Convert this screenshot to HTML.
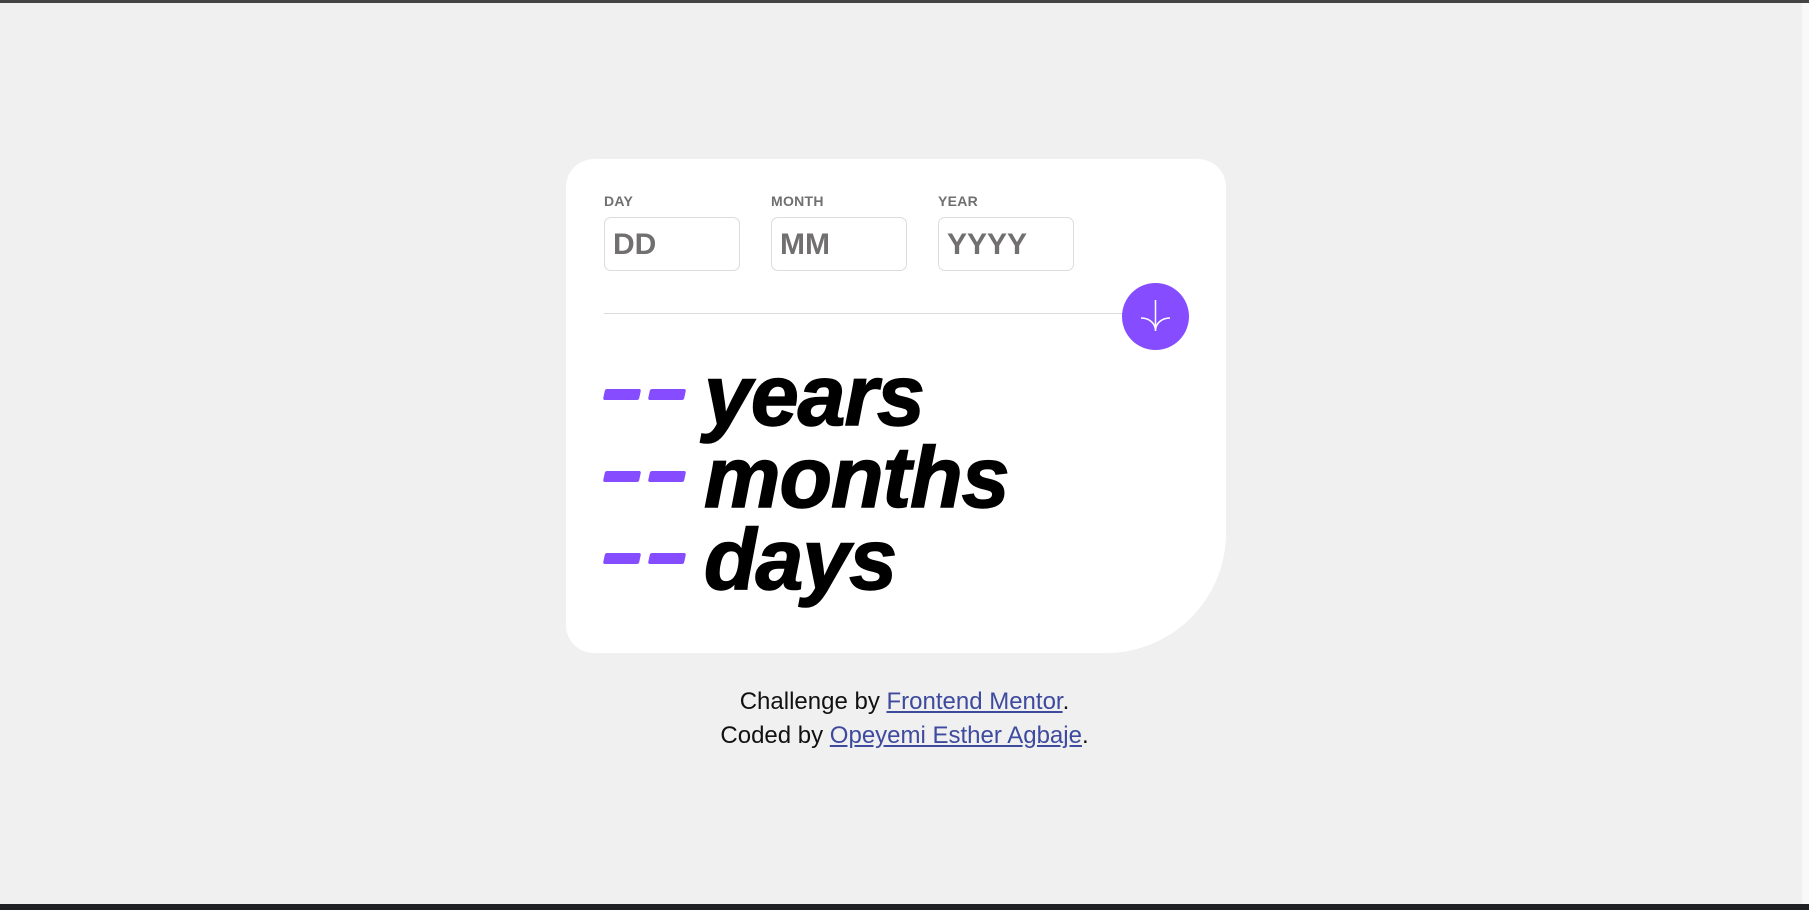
<!DOCTYPE html>
<html><head><style>
*{margin:0;padding:0;box-sizing:border-box}
body{width:1809px;height:910px;background:#f0f0f0;position:relative;overflow:hidden;font-family:"Liberation Sans",sans-serif}
.top{position:absolute;left:0;top:0;width:1809px;height:3px;background:#444}
.bot{position:absolute;left:0;top:904px;width:1809px;height:6px;background:#202124}
.sb{position:absolute;left:1802px;top:3px;width:7px;height:901px;background:#f9f9f9}
.card{position:absolute;left:566px;top:159px;width:660px;height:494px;background:#fff;border-radius:28px 28px 120px 28px}
.lab{position:absolute;top:34px;font-size:14px;font-weight:bold;color:#716f6f;letter-spacing:0.3px}
.inp{position:absolute;top:58px;width:136px;height:54px;border:1px solid #dcdcdc;border-radius:7px;font-size:30px;font-weight:bold;color:#716f6f;padding:10px 0 0 8px}
.line{position:absolute;left:38px;top:154px;width:520px;height:1px;background:#dcdcdc}
.btn{position:absolute;left:556px;top:124px;width:67px;height:67px;border-radius:50%;background:#854dff}
.row{position:absolute;left:38px;height:82px;font-size:86px;font-weight:bold;font-style:italic;line-height:82px;color:#000}
.d{position:absolute;top:34px;width:36px;height:11px;border-radius:2px;background:#854dff;transform:skewX(-12deg)}
.row span.t{position:absolute;left:100px;top:0px;letter-spacing:-1px;-webkit-text-stroke:1.5px #000}
.foot{position:absolute;left:0;width:1809px;text-align:center;font-size:24px;color:#111}
.foot a{color:#3e4a9e;text-decoration:underline}
</style></head><body>
<div class="top"></div><div class="sb"></div><div class="bot"></div>
<div class="card">
<div class="lab" style="left:38px">DAY</div>
<div class="lab" style="left:205px">MONTH</div>
<div class="lab" style="left:372px">YEAR</div>
<div class="inp" style="left:38px">DD</div>
<div class="inp" style="left:205px">MM</div>
<div class="inp" style="left:372px">YYYY</div>
<div class="line"></div>
<div class="btn"><svg width="67" height="67" viewBox="0 0 67 67"><path d="M33.5 17V48M19 35C27 35 33.5 40 33.5 48M48 35C40 35 33.5 40 33.5 48" stroke="#fff" stroke-width="1.5" fill="none"/></svg></div>
<div class="row" style="top:196px"><i class="d" style="left:0"></i><i class="d" style="left:45px"></i><span class="t">years</span></div>
<div class="row" style="top:278px"><i class="d" style="left:0"></i><i class="d" style="left:45px"></i><span class="t">months</span></div>
<div class="row" style="top:360px"><i class="d" style="left:0"></i><i class="d" style="left:45px"></i><span class="t">days</span></div>
</div>
<div class="foot" style="top:688px">Challenge by <a>Frontend Mentor</a>.</div>
<div class="foot" style="top:722px">Coded by <a>Opeyemi Esther Agbaje</a>.</div>
</body></html>
